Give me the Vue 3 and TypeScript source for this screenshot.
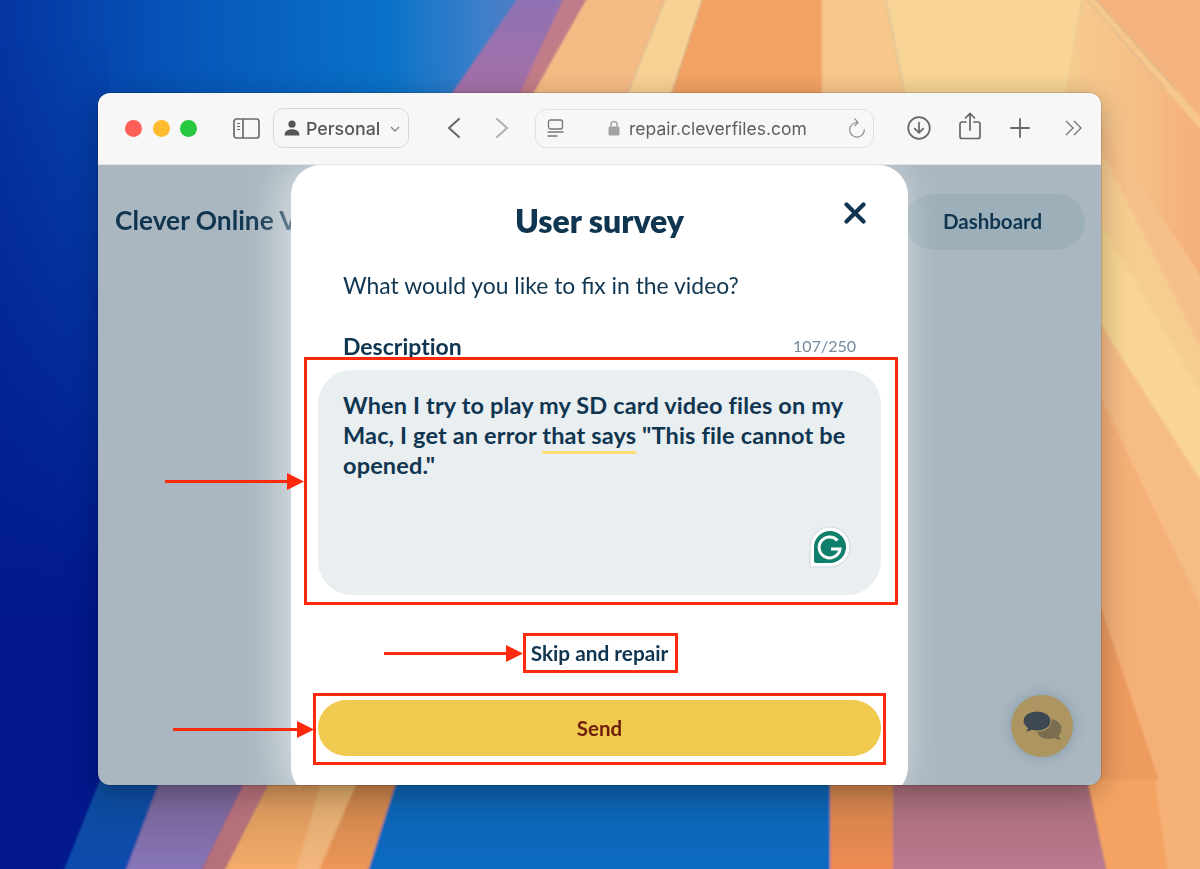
<script setup lang="ts">
const lines: string[] = [
  'When I try to play my SD card video files on my',
  'Mac, I get an error ',
  'opened."',
]
</script>

<template>
  <div class="desktop">
    <!-- wallpaper -->
    <svg class="wallpaper" viewBox="0 0 1200 869" preserveAspectRatio="none">
      <defs>
        <linearGradient id="blueTop" gradientUnits="userSpaceOnUse" x1="0" y1="0" x2="600" y2="0">
          <stop offset="0" stop-color="#0535a2" />
          <stop offset="0.3" stop-color="#0655b8" />
          <stop offset="0.65" stop-color="#0a72c8" />
          <stop offset="0.8" stop-color="#3c7fca" />
          <stop offset="1" stop-color="#7c78bc" />
        </linearGradient>
        <linearGradient id="leftFade" gradientUnits="userSpaceOnUse" x1="0" y1="40" x2="0" y2="620">
          <stop offset="0" stop-color="#02188c" stop-opacity="0" />
          <stop offset="1" stop-color="#02188c" stop-opacity="1" />
        </linearGradient>
        <linearGradient id="purpleTop" gradientUnits="userSpaceOnUse" x1="0" y1="0" x2="0" y2="100">
          <stop offset="0" stop-color="#8f72b4" />
          <stop offset="1" stop-color="#a770a6" />
        </linearGradient>
        <linearGradient id="rightTop" gradientUnits="userSpaceOnUse" x1="1060" y1="0" x2="1200" y2="0">
          <stop offset="0" stop-color="#f7cc90" />
          <stop offset="0.45" stop-color="#f6c28a" />
          <stop offset="1" stop-color="#f4af7a" />
        </linearGradient>
        <linearGradient id="bottomBlue" x1="0" y1="0" x2="0" y2="1">
          <stop offset="0" stop-color="#125fa6" />
          <stop offset="0.45" stop-color="#0a66b8" />
          <stop offset="1" stop-color="#0a6cc4" />
        </linearGradient>
        <linearGradient id="bottomMauve" x1="0" y1="0" x2="0" y2="1">
          <stop offset="0" stop-color="#a26a74" />
          <stop offset="1" stop-color="#bd7a90" />
        </linearGradient>
        <linearGradient id="bottomOrange" x1="0" y1="0" x2="0" y2="1">
          <stop offset="0" stop-color="#c8804a" />
          <stop offset="1" stop-color="#f28c55" />
        </linearGradient>
        <linearGradient id="bottomPeach" x1="0" y1="0" x2="0" y2="1">
          <stop offset="0" stop-color="#cd9158" />
          <stop offset="1" stop-color="#f8ad6c" />
        </linearGradient>
        <linearGradient id="bottomPale" x1="0" y1="0" x2="0" y2="1">
          <stop offset="0" stop-color="#d6a468" />
          <stop offset="1" stop-color="#f6b880" />
        </linearGradient>
        <linearGradient id="bottomDeep" x1="0" y1="0" x2="0" y2="1">
          <stop offset="0" stop-color="#c07c48" />
          <stop offset="1" stop-color="#f09a5a" />
        </linearGradient>
        <linearGradient id="bottomPurple" x1="0" y1="0" x2="0" y2="1">
          <stop offset="0" stop-color="#72608e" />
          <stop offset="1" stop-color="#8a78bc" />
        </linearGradient>
        <linearGradient id="bottomNavyBlue" x1="0" y1="0" x2="0" y2="1">
          <stop offset="0" stop-color="#0d4c9a" />
          <stop offset="1" stop-color="#0a4cb0" />
        </linearGradient>
        <filter id="soft" x="-5%" y="-5%" width="110%" height="110%">
          <feGaussianBlur stdDeviation="1.200" />
        </filter>
      </defs>

      <rect x="0" y="0" width="1200" height="869" fill="#0a66c0" />
      <rect x="0" y="0" width="600" height="869" fill="url(#blueTop)" />

      <g filter="url(#soft)">
        <!-- top bands -->
        <polygon points="520,-5 590,-5 528,110 440,110" fill="url(#purpleTop)" />
        <polygon points="565,-5 592,-5 530,110 512,110" fill="#cf7f7c" opacity="0.75" />
        <polygon points="589,-5 667,-5 621,110 524,110" fill="#f6bb85" />
        <polygon points="667,-5 704,-5 666,110 621,110" fill="#f8d295" />
        <polygon points="704,-5 822,-5 822,110 666,110" fill="#f3a263" />
        <polygon points="822,-5 885,-5 908,110 822,110" fill="#f7c78c" />
        <polygon points="885,-5 1083,-5 1063,110 908,110" fill="#f8d596" />

        <!-- right side bands, painted from the lowest one up -->
        <rect x="1090" y="90" width="120" height="790" fill="#ee9b60" />
        <polygon points="1090,90 1210,90 1210,880 1192,880 1101,607 1090,590" fill="#f5b078" />
        <polygon points="1090,90 1210,90 1210,625 1101,398 1090,380" fill="#f6bc85" />
        <polygon points="1090,90 1210,90 1210,495 1101,325 1090,310" fill="#f8d594" />
        <polygon points="1090,90 1210,90 1210,408 1101,225 1090,210" fill="#f6cd90" />
        <polygon points="1090,90 1210,90 1210,368 1101,150 1090,135" fill="#f6c08a" />
        <polygon points="1090,90 1210,90 1210,290 1101,125 1090,115" fill="url(#rightTop)" />

        <!-- corner above the window -->
        <polygon points="1083,-5 1210,140 1210,290 1101,125 1063,105" fill="url(#rightTop)" />
        <polygon points="1092,-5 1210,-5 1210,128" fill="#f5b47f" />
        <polygon points="1083,-5 1092,-5 1210,128 1210,140" fill="#f7c88d" />
      </g>

      <rect x="0" y="0" width="110" height="790" fill="url(#leftFade)" />

      <!-- bottom bands -->
      <rect x="0" y="785" width="1200" height="84" fill="#02188c" />
      <g filter="url(#soft)">
        <polygon points="100,780 160,780 124,875 62,875" fill="url(#bottomNavyBlue)" />
        <polygon points="160,780 245,780 199,875 124,875" fill="url(#bottomPurple)" />
        <polygon points="245,780 270,780 222,875 199,875" fill="#b5707a" />
        <polygon points="270,780 397,780 367,875 222,875" fill="url(#bottomPeach)" />
        <polygon points="322,780 358,780 317,875 295,875" fill="url(#bottomPale)" />
        <polygon points="358,780 397,780 367,875 317,875" fill="url(#bottomDeep)" />
        <polygon points="397,780 830,780 830,875 367,875" fill="url(#bottomBlue)" />
        <rect x="830" y="780" width="63" height="95" fill="url(#bottomOrange)" />
        <polygon points="893,780 1087,780 1107,875 893,875" fill="url(#bottomMauve)" />
        <polygon points="1087,780 1210,780 1210,875 1107,875" fill="#f4a364" />
        <polygon points="1155,780 1210,780 1210,875 1168,875" fill="#f5b176" />
      </g>
    </svg>

    <div class="window">
      <header class="toolbar">
        <div class="lights">
          <span class="light red"></span>
          <span class="light yellow"></span>
          <span class="light green"></span>
        </div>

        <svg class="sidebar-icon" viewBox="0 0 27 21" fill="none" stroke="#6b6b6b" stroke-width="1.7">
          <rect x="1" y="1" width="25" height="19" rx="2.5" />
          <path d="M10 1v19" />
          <path d="M4 5.5h3M4 8.5h3M4 11.5h3" stroke-width="1.2" />
        </svg>

        <div class="profile">
          <svg class="person" viewBox="0 0 16 16" fill="#555">
            <circle cx="8" cy="4.2" r="3.6" />
            <path d="M0.5 15.5c0-4 3-6.2 7.5-6.2s7.500 2.200 7.500 6.200z" />
          </svg>
          <span class="profile-name">Personal</span>
          <svg class="caret" viewBox="0 0 10 6" fill="none" stroke="#8a8a8a" stroke-width="1.4">
            <path d="M1 1l4 4 4-4" />
          </svg>
        </div>

        <svg class="nav back" viewBox="0 0 14 22" fill="none" stroke="#666" stroke-width="2" stroke-linecap="round">
          <path d="M12 2L2 11l10 9" />
        </svg>
        <svg class="nav forward" viewBox="0 0 14 22" fill="none" stroke="#b0b0b0" stroke-width="2" stroke-linecap="round">
          <path d="M2 2l10 9-10 9" />
        </svg>

        <div class="urlbar">
          <svg class="tab-icon" viewBox="0 0 17 18" fill="none" stroke="#777" stroke-width="1.3">
            <rect x="1.5" y="1" width="14" height="9" rx="2" />
            <path d="M0.5 13h16M0.5 17h10" />
          </svg>
          <svg class="lock" viewBox="0 0 12 16">
            <path d="M3 7V4.5a3 3 0 0 1 6 0V7" fill="none" stroke="#a3a3a3" stroke-width="1.5" />
            <rect x="0.5" y="6.5" width="11" height="9" rx="1.6" fill="#a3a3a3" />
          </svg>
          <span class="url">repair.cleverfiles.com</span>
          <svg class="reload" viewBox="0 0 18 20" fill="none" stroke="#8c8c8c" stroke-width="1.200" stroke-linecap="round">
            <path d="M9.500 4.500A7.300 7.300 0 1 0 16.300 11.500" />
            <path d="M7 1l3 3.500-3 3" />
          </svg>
        </div>

        <svg class="tool download" viewBox="0 0 24 24" fill="none" stroke="#666" stroke-width="1.7" stroke-linecap="round">
          <circle cx="12" cy="12" r="10.8" />
          <path d="M12 6.5v10M7.800 12.600l4.200 4.200 4.200-4.200" />
        </svg>
        <svg class="tool share" viewBox="0 0 22 28" fill="none" stroke="#666" stroke-width="1.7" stroke-linecap="round">
          <path d="M7 10H3a2 2 0 0 0-2 2v12.500a2 2 0 0 0 2 2h16a2 2 0 0 0 2-2V12a2 2 0 0 0-2-2h-4" />
          <path d="M11 18V2M6.500 6L11 1.500 15.500 6" />
        </svg>
        <svg class="tool plus" viewBox="0 0 20 20" fill="none" stroke="#666" stroke-width="1.8" stroke-linecap="round">
          <path d="M10 1v18M1 10h18" />
        </svg>
        <svg class="tool more" viewBox="0 0 18 16" fill="none" stroke="#777" stroke-width="1.4">
          <path d="M1 1l7 7-7 7M9 1l7 7-7 7" />
        </svg>
      </header>

      <main class="page">
        <div class="site-header">
          <span class="logo">Clever Online Video Repair</span>
          <span class="dashboard">Dashboard</span>
        </div>

        <button class="chat" type="button">
          <svg viewBox="0 0 40 32" width="40" height="32">
            <path d="M27 9c7 0 12.500 4 12.500 10 0 2.800-1.100 5-2.900 6.800.4 1.500 1.300 2.800 2.900 3.700-2.800.3-5.300-.2-7.200-1.400-1.600.5-3.300.8-5.300.8-7 0-12.500-4-12.500-10S20 9 27 9z" fill="#7a6d50" />
            <path d="M15 1c8 0 14 4.200 14 10s-6 10-14 10c-1.800 0-3.500-.2-5-.7C8 21.700 5.500 22.400 2 22c1.700-.9 2.900-2.200 3.400-3.800C2.700 16.300 1 13.800 1 11 1 5.200 7 1 15 1z" fill="#3e4852" stroke="#ad9561" stroke-width="1.200" />
          </svg>
        </button>

        <section class="modal">
          <h1 class="modal-title">User survey</h1>
          <svg class="close" viewBox="0 0 22 22" fill="none" stroke="#0f3550" stroke-width="4.200" stroke-linecap="round">
            <path d="M2.500 2.500l17 17M19.500 2.500l-17 17" />
          </svg>
          <p class="question">What would you like to fix in the video?</p>
          <div class="label-row">
            <span class="label">Description</span>
            <span class="counter">107/250</span>
          </div>
          <div class="textarea">
            <p>
              {{ lines[0] }}<br />
              {{ lines[1] }}<span class="flagged">that says</span> "This file cannot be<br />
              {{ lines[2] }}
            </p>
            <svg class="grammarly" viewBox="0 0 42 42">
              <path d="M21 1a20 20 0 0 1 0 40H1V21A20 20 0 0 1 21 1z" fill="#fff" stroke="#d3d9dc" stroke-width="1.200" />
              <path d="M21 5a16 16 0 0 1 0 32H7a2 2 0 0 1-2-2V21A16 16 0 0 1 21 5z" fill="#0f7f6b" />
              <path d="M28.500 14.500A10.500 10.500 0 1 0 31 23h-9" fill="none" stroke="#fff" stroke-width="3" />
            </svg>
          </div>
          <a class="skip">Skip and repair</a>
          <button class="send" type="button">Send</button>
        </section>
      </main>
    </div>

    <!-- red annotations -->
    <svg class="marks" viewBox="0 0 1200 869" fill="none" stroke="#ff2a0c" stroke-width="3">
      <rect x="305.500" y="358.500" width="591" height="245" />
      <rect x="524.500" y="634.500" width="152" height="37" />
      <rect x="314.500" y="694.500" width="570" height="69" />
      <path d="M165 481.500h124M384 653.500h124M173 729.500h126" />
      <g fill="#ff2a0c" stroke="none">
        <polygon points="287,473 304,481.500 287,490" />
        <polygon points="506,645 523,653.500 506,662" />
        <polygon points="297,721 314,729.500 297,738" />
      </g>
    </svg>
  </div>
</template>

<style>
html, body {
  margin: 0;
  padding: 0;
  overflow: hidden;
}
</style>

<style scoped>
.desktop {
  position: relative;
  width: 1200px;
  height: 869px;
  overflow: hidden;
  padding: 93px 0 0 98px;
  box-sizing: border-box;
  font-family: 'Lato', 'Noto Sans', sans-serif;
}

.wallpaper, .marks {
  position: absolute;
  left: 0;
  top: 0;
  width: 1200px;
  height: 869px;
}
.marks { pointer-events: none; }

.window {
  position: relative;
  width: 1003px;
  height: 692px;
  border-radius: 12px;
  overflow: hidden;
  display: flex;
  flex-direction: column;
  box-shadow: 0 0 0 1px rgba(0,0,0,0.12), 0 6px 28px rgba(0,0,0,0.28);
}

/* toolbar */
.toolbar {
  height: 72px;
  flex: none;
  box-sizing: border-box;
  background: #f7f7f7;
  border-bottom: 1px solid #e2e4e5;
  display: flex;
  align-items: center;
  padding: 0 0 1px 27px;
  font-family: 'Inter', 'Noto Sans', sans-serif;
}
.lights {
  display: flex;
  gap: 10.500px;
  width: 73px;
}
.light {
  width: 17px;
  height: 17px;
  border-radius: 50%;
}
.light.red { background: #fe5f57; }
.light.yellow { background: #febc2e; }
.light.green { background: #28c840; }

.sidebar-icon {
  width: 27px;
  height: 21px;
  margin-left: 35px;
}
.profile {
  width: 136px;
  height: 40px;
  margin-left: 13px;
  box-sizing: border-box;
  border: 1.500px solid #d6d8d9;
  border-radius: 10px;
  display: flex;
  align-items: center;
  padding-left: 10px;
}
.person {
  width: 16px;
  height: 16px;
}
.profile-name {
  font-size: 17.800px;
  font-weight: 500;
  color: #555;
  margin-left: 6px;
}
.caret {
  width: 10px;
  height: 6px;
  margin-left: 10px;
  margin-top: 2px;
}
.nav {
  width: 14px;
  height: 22px;
}
.back { margin-left: 38px; }
.forward { margin-left: 34px; }

.urlbar {
  width: 339px;
  height: 39px;
  margin-left: 26px;
  box-sizing: border-box;
  border: 1.500px solid #dfe1e2;
  border-radius: 11px;
  display: flex;
  align-items: center;
  padding-left: 11px;
}
.tab-icon {
  width: 17px;
  height: 18px;
}
.lock {
  width: 12px;
  height: 16px;
  margin-left: 44px;
}
.url {
  font-size: 17.500px;
  color: #5e5e5e;
  margin-left: 9px;
  white-space: nowrap;
  width: 178px;
}
.reload {
  width: 18px;
  height: 20px;
  margin-left: 41px;
}
.tool { flex: none; }
.download { width: 24px; height: 24px; margin-left: 33px; }
.share { width: 22px; height: 28px; margin-left: 28px; margin-top: -4px; }
.plus { width: 20px; height: 20px; margin-left: 29px; }
.more { width: 18px; height: 16px; margin-left: 35px; }

/* page behind dialog */
.page {
  position: relative;
  flex: 1;
  min-height: 0;
  background: #aab7c0;
  overflow: hidden;
}
.site-header {
  display: flex;
  justify-content: space-between;
  align-items: center;
  padding: 29px 16px 0 17px;
}
.logo {
  font-size: 26.300px;
  font-weight: 700;
  color: #0f3550;
  white-space: nowrap;
  padding-bottom: 4px;
}
.dashboard {
  width: 180px;
  height: 56px;
  border-radius: 28px;
  background: #9dafb9;
  color: #0f3550;
  font-size: 20.500px;
  font-weight: 700;
  display: flex;
  align-items: center;
  justify-content: center;
  padding-right: 5px;
  padding-bottom: 2px;
  box-sizing: border-box;
}
.chat {
  position: absolute;
  left: 913px;
  top: 530px;
  width: 62px;
  height: 62px;
  border: 0;
  padding: 0;
  border-radius: 50%;
  background: #ad9561;
  box-shadow: 0 0 14px rgba(60,100,140,0.35);
  display: flex;
  align-items: center;
  justify-content: center;
}

/* dialog */
.modal {
  position: absolute;
  left: 193px;
  top: 0;
  width: 617px;
  height: 632px;
  box-sizing: border-box;
  background: #fff;
  border-radius: 30px;
  box-shadow: -8px 0 44px rgba(255,255,255,0.6);
  padding: 0 27px;
  display: flex;
  flex-direction: column;
  color: #0f3550;
}
.modal-title {
  margin: 36px 0 0;
  font-size: 32px;
  line-height: 40px;
  font-weight: 800;
  text-align: center;
}
.close {
  position: absolute;
  left: 553px;
  top: 37px;
  width: 22px;
  height: 22px;
}
.question {
  margin: 29px 0 0 25px;
  font-size: 22.900px;
  line-height: 30px;
}
.label-row {
  display: flex;
  justify-content: space-between;
  align-items: flex-end;
  margin: 31px 25px 0;
}
.label {
  font-size: 23px;
  line-height: 30px;
  font-weight: 700;
  font-variant-ligatures: none;
}
.counter {
  font-size: 16px;
  line-height: 20px;
  color: #76889a;
  margin-bottom: 5px;
}
.textarea {
  position: relative;
  height: 225px;
  margin-top: 9px;
  box-sizing: border-box;
  padding: 20px 25px;
  background: #e9eef1;
  border-radius: 34px;
}
.textarea p {
  margin: 0;
  font-size: 23.500px;
  letter-spacing: 0.15px;
  line-height: 30px;
  font-weight: 700;
  white-space: nowrap;
}
.flagged {
  text-decoration: underline 3px #ffdc75;
  text-decoration-skip-ink: none;
  text-underline-offset: 7px;
}
.grammarly {
  position: absolute;
  right: 30px;
  bottom: 27px;
  width: 42px;
  height: 42px;
}
.skip {
  margin-top: 44px;
  text-align: center;
  font-size: 20.800px;
  line-height: 28px;
  font-weight: 700;
}
.send {
  height: 56px;
  margin-top: 33px;
  flex: none;
  border: 0;
  border-radius: 28px;
  background: #f0ca4e;
  color: #6f1d0c;
  font-family: inherit;
  font-size: 20.500px;
  font-weight: 700;
}
</style>
